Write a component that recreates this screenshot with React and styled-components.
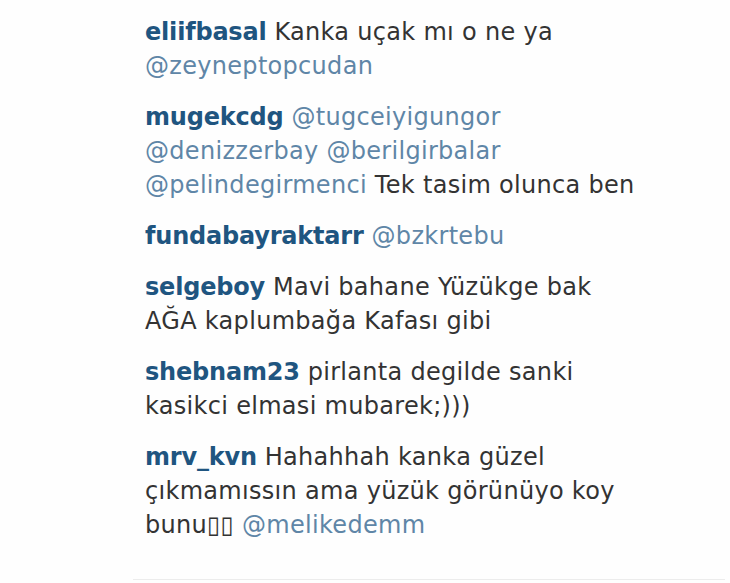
import React from "react";
import styled, { createGlobalStyle } from "styled-components";

const Global = createGlobalStyle`
  html, body { margin: 0; padding: 0; background: #fefefe; }
  body { font-family: "DejaVu Sans", "Liberation Sans", sans-serif; }
`;

const Page = styled.div`
  width: 730px;
  height: 583px;
  overflow: hidden;
  box-sizing: border-box;
  padding: 15px 0 0 145px;
  display: flex;
  flex-direction: column;
`;

const List = styled.ul`
  list-style: none;
  margin: 0;
  padding: 0;
  display: flex;
  flex-direction: column;
  gap: 17px;
`;

const Comment = styled.li`
  display: flex;
  flex-direction: column;
  font-size: 24px;
  line-height: 34px;
  color: #333333;
  letter-spacing: 0.3px;
  white-space: nowrap;
`;

const Line = styled.div``;

const User = styled.span`
  color: #1f5580;
  font-weight: 700;
  letter-spacing: -0.2px;
`;

const Mention = styled.span`
  color: #5f86a7;
`;

const Divider = styled.hr`
  border: 0;
  height: 1px;
  background: #ececec;
  margin: auto 5px 3px -12px;
`;

// each comment: list of lines, each line: list of [kind, text]
const comments = [
  {
    user: "eliifbasal",
    lines: [
      [["t", "Kanka uçak mı o ne ya"]],
      [["m", "@zeyneptopcudan"]],
    ],
  },
  {
    user: "mugekcdg",
    lines: [
      [["m", "@tugceiyigungor"]],
      [["m", "@denizzerbay"], ["t", " "], ["m", "@berilgirbalar"]],
      [["m", "@pelindegirmenci"], ["t", " Tek tasim olunca ben"]],
    ],
  },
  { user: "fundabayraktarr", lines: [[["m", "@bzkrtebu"]]] },
  {
    user: "selgeboy",
    lines: [[["t", "Mavi bahane Yüzükge bak"]], [["t", "AĞA kaplumbağa Kafası gibi"]]],
  },
  {
    user: "shebnam23",
    lines: [[["t", "pirlanta degilde sanki"]], [["t", "kasikci elmasi mubarek;)))"]]],
  },
  {
    user: "mrv_kvn",
    lines: [
      [["t", "Hahahhah kanka güzel"]],
      [["t", "çıkmamıssın ama yüzük görünüyo koy"]],
      [["t", "bunu\u25AF\u25AF "], ["m", "@melikedemm"]],
    ],
  },
];

export default function App() {
  return (
    <Page>
      <Global />
      <List>
        {comments.map((c) => (
          <Comment key={c.user}>
            {c.lines.map((line, li) => (
              <Line key={li}>
                {li === 0 && (
                  <>
                    <User>{c.user}</User>{" "}
                  </>
                )}
                {line.map(([k, txt], i) =>
                  k === "m" ? <Mention key={i}>{txt}</Mention> : <span key={i}>{txt}</span>
                )}
              </Line>
            ))}
          </Comment>
        ))}
      </List>
      <Divider />
    </Page>
  );
}
